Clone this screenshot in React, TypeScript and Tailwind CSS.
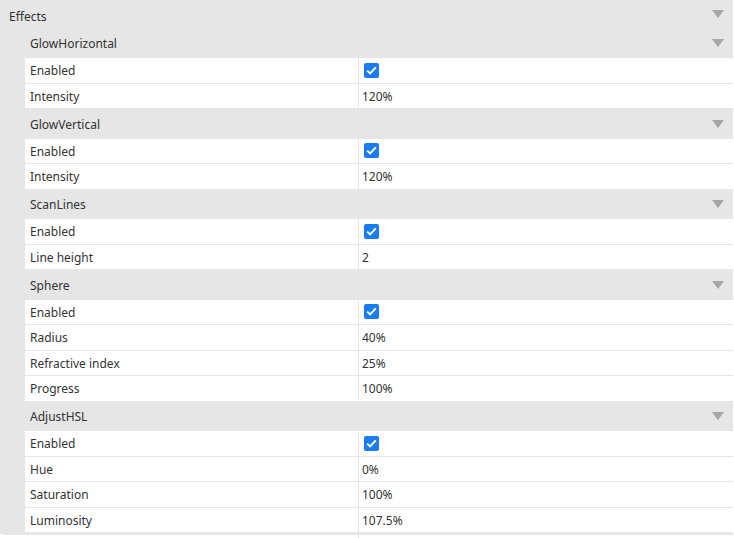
import React from 'react';

type Prop = { label: string; value?: string; check?: boolean };
type Group = { name: string; props: Prop[] };

const groups: Group[] = [
  { name: 'GlowHorizontal', props: [{ label: 'Enabled', check: true }, { label: 'Intensity', value: '120%' }] },
  { name: 'GlowVertical', props: [{ label: 'Enabled', check: true }, { label: 'Intensity', value: '120%' }] },
  { name: 'ScanLines', props: [{ label: 'Enabled', check: true }, { label: 'Line height', value: '2' }] },
  {
    name: 'Sphere',
    props: [
      { label: 'Enabled', check: true },
      { label: 'Radius', value: '40%' },
      { label: 'Refractive index', value: '25%' },
      { label: 'Progress', value: '100%' },
    ],
  },
  {
    name: 'AdjustHSL',
    props: [
      { label: 'Enabled', check: true },
      { label: 'Hue', value: '0%' },
      { label: 'Saturation', value: '100%' },
      { label: 'Luminosity', value: '107.5%' },
    ],
  },
];

const Arrow: React.FC = () => (
  <svg width="12" height="8" viewBox="0 0 12 8" className="mr-[9px] shrink-0">
    <path d="M0 0 H12 L6 8 Z" fill="#a6a6a6" />
  </svg>
);

const Check: React.FC = () => (
  <div className="w-[15px] h-[15px] rounded-[2px] bg-[#1b7cf2] flex items-center justify-center">
    <svg width="11" height="9" viewBox="0 0 11 9">
      <path d="M1.2 4.6 L4.1 7.4 L9.8 1.4" stroke="white" strokeWidth="2" fill="none" />
    </svg>
  </div>
);

const Row: React.FC<{ p: Prop }> = ({ p }) => (
  <div className="flex h-[25.5px] bg-white border-b border-[#e6e6e6]">
    <div className="w-[334px] pl-[5px] flex items-center border-r border-[#e6e6e6]">
      <span className="pt-[2px]">{p.label}</span>
    </div>
    <div className="flex-1 pl-[3px] flex items-center">
      {p.check ? <div className="ml-[2px]"><Check /></div> : <span className="pt-[2px]">{p.value}</span>}
    </div>
  </div>
);

const App: React.FC = () => {
  return (
    <div
      className="w-[734px] h-[538px] overflow-hidden bg-white text-[12px] text-[#333]"
      style={{ fontFamily: '"Noto Sans", "Open Sans", sans-serif' }}
    >
      <div className="w-[733px] bg-[#e6e6e6]">
        <div className="h-[28.5px] flex items-center justify-between pl-[9px]">
          <span className="pt-[5px]">Effects</span>
          <Arrow />
        </div>
        <div className="pl-[25px]">
          {groups.map((g) => (
            <div key={g.name}>
              <div className="h-[29.5px] flex items-center justify-between pl-[5px]">
                <span className="pt-[2px]">{g.name}</span>
                <Arrow />
              </div>
              {g.props.map((p, i) => (
                <Row key={i} p={p} />
              ))}
            </div>
          ))}
        </div>
        <div className="h-[1px]" />
      </div>
      <div className="ml-[5px] flex h-[20px] bg-white border-t border-[#e6e6e6]">
        <div className="w-[354px] border-r border-[#e6e6e6]" />
      </div>
    </div>
  );
};

export default App;
